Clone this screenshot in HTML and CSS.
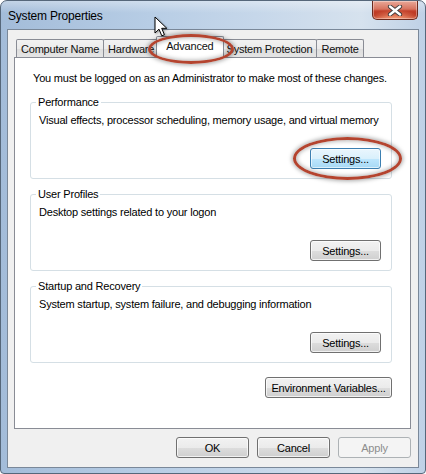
FILE: index.html
```html
<!DOCTYPE html>
<html>
<head>
<meta charset="utf-8">
<link rel="stylesheet" href="styles.css">
</head>
<body>
<div class="window">
  <div class="titlebar">
    <span class="title">System Properties</span>
    <div class="close">
      <svg width="16" height="11" viewBox="0 0 16 11"><path d="M3 1.5 L13 9.5 M13 1.5 L3 9.5" stroke="#3a3a3a" stroke-width="4.2" stroke-linecap="round"/><path d="M3 1.5 L13 9.5 M13 1.5 L3 9.5" stroke="#ffffff" stroke-width="2.4" stroke-linecap="round"/></svg>
    </div>
  </div>
  <div class="client">
    <div class="tabs">
      <div class="tab">Computer Name</div>
      <div class="tab">Hardware</div>
      <div class="tab active">Advanced</div>
      <div class="tab">System Protection</div>
      <div class="tab">Remote</div>
    </div>
    <div class="panel">
      <p class="notice">You must be logged on as an Administrator to make most of these changes.</p>
      <fieldset class="group">
        <legend>Performance</legend>
        <p class="desc">Visual effects, processor scheduling, memory usage, and virtual memory</p>
        <div class="row"><button class="btn hot">Settings...</button></div>
      </fieldset>
      <fieldset class="group">
        <legend>User Profiles</legend>
        <p class="desc">Desktop settings related to your logon</p>
        <div class="row"><button class="btn">Settings...</button></div>
      </fieldset>
      <fieldset class="group">
        <legend>Startup and Recovery</legend>
        <p class="desc">System startup, system failure, and debugging information</p>
        <div class="row"><button class="btn">Settings...</button></div>
      </fieldset>
      <div class="row env"><button class="btn wide">Environment Variables...</button></div>
    </div>
    <div class="footer">
      <button class="btn ok">OK</button>
      <button class="btn ok">Cancel</button>
      <button class="btn ok disabled">Apply</button>
    </div>
  </div>
  <div class="ring ring-tab"></div>
  <div class="ring ring-btn"></div>
  <svg class="cursor" width="14" height="22" viewBox="0 0 14 22">
    <path d="M1 1 L1 17 L5 13.2 L7.8 19.8 L10.4 18.7 L7.7 12.3 L12.8 12.3 Z" fill="#ffffff" stroke="#000000" stroke-width="1" stroke-linejoin="miter"/>
  </svg>
</div>
</body>
</html>
```
FILE: styles.css
```css
* { box-sizing: border-box; }
html, body { margin: 0; padding: 0; background: #ffffff; }
body {
  width: 426px;
  height: 474px;
  overflow: hidden;
  font-family: "Liberation Sans", Arial, sans-serif;
  font-size: 11px;
  letter-spacing: -0.2px;
  color: #000000;
}
.window {
  position: relative;
  width: 426px;
  height: 474px;
  border: 1px solid #56677a;
  border-radius: 7px 7px 4px 4px;
  background:
    linear-gradient(180deg, rgba(255,255,255,0.35) 0px, rgba(255,255,255,0) 12px),
    linear-gradient(90deg, #a3bcd9 0%, #b7cde5 35%, #c6d7ea 60%, #d6e2ee 85%, #bfd1e6 100%);
  padding: 0 6px 5px 6px;
  display: flex;
  flex-direction: column;
}
.titlebar {
  height: 28px;
  display: flex;
  align-items: flex-start;
  justify-content: space-between;
}
.title {
  margin-top: 8px;
  margin-left: 1px;
  font-size: 12px;
  color: #000000;
}
.close {
  width: 46px;
  height: 19px;
  margin-right: 1px;
  border: 1px solid #6b2a1e;
  border-top: none;
  border-radius: 0 0 5px 5px;
  background:
    radial-gradient(ellipse 60% 50% at 50% 100%, rgba(255,170,130,0.9), rgba(255,170,130,0) 100%),
    linear-gradient(180deg, #e9a999 0%, #d7735f 45%, #c3412b 55%, #b8341f 80%, #c9533a 100%);
  box-shadow: inset 0 0 0 1px rgba(255,255,255,0.35);
  display: flex;
  align-items: center;
  justify-content: center;
}
.client {
  flex: 1;
  background: #f0f0f0;
  border: 1px solid #7a8899;
  padding: 9px 7px 8px 6px;
  display: flex;
  flex-direction: column;
}
.tabs {
  display: flex;
  align-items: flex-end;
  height: 18px;
  padding-left: 2px;
  position: relative;
  z-index: 2;
}
.tab {
  height: 18px;
  padding: 3px 4px 0 4px;
  border: 1px solid #898c95;
  border-bottom: none;
  border-radius: 2px 2px 0 0;
  background: linear-gradient(180deg, #f2f2f2 0%, #ebebeb 50%, #dddddd 51%, #e5e5e5 100%);
  margin-right: -1px;
  color: #101010;
  white-space: nowrap;
}
.tab.active {
  height: 22px;
  margin: 0 -2px -1px -2px;
  padding: 3px 9px 0 9px;
  background: #ffffff;
  position: relative;
  z-index: 3;
}
.panel {
  height: 372px;
  background: #ffffff;
  border: 1px solid #898c95;
  padding: 13px 18px 0 15px;
  position: relative;
  z-index: 1;
}
.notice {
  margin: 0 0 0 3px;
  line-height: 15px;
  white-space: nowrap;
}
.group {
  margin: 9px 0 0 0;
  padding: 3px 10px 9px 8px;
  border: 1px solid #d5dfe5;
  border-radius: 3px;
  min-width: 0;
}
.group + .group { margin-top: 8px; }
.group legend {
  padding: 0 2px;
  margin-left: -3px;
  line-height: 15px;
}
.desc {
  margin: 0;
  line-height: 15px;
  white-space: nowrap;
}
.row {
  display: flex;
  justify-content: flex-end;
  margin-top: 20px;
}
.env { margin-top: 14px; }
.btn {
  font-family: inherit;
  font-size: 11px;
  letter-spacing: -0.2px;
  color: #000000;
  height: 21px;
  width: 71px;
  padding: 0;
  border: 1px solid #707070;
  border-radius: 3px;
  background: linear-gradient(180deg, #f2f2f2 0%, #ebebeb 50%, #dddddd 51%, #cfcfcf 100%);
  box-shadow: inset 0 0 0 1px rgba(255,255,255,0.7);
}
.btn.hot {
  border-color: #3c7fb1;
  background: linear-gradient(180deg, #eaf6fd 0%, #d9f0fc 50%, #bee6fd 51%, #a7d9f5 100%);
  box-shadow: inset 0 0 0 1px rgba(255,255,255,0.6);
}
.btn.wide { width: 127px; }
.footer {
  margin-top: 8px;
  display: flex;
  justify-content: flex-end;
  gap: 8px;
}
.btn.ok { width: 73px; }
.btn.disabled {
  color: #8d8d8d;
  border-color: #adb2b5;
  background: #f4f4f4;
  box-shadow: none;
}
.ring {
  position: absolute;
  border: 3px solid #b4442f;
  border-radius: 50%;
  box-shadow: 0 0 4px 1px rgba(0,0,0,0.35), inset 0 0 4px 1px rgba(0,0,0,0.3);
  z-index: 5;
}
.ring-tab {
  left: 147px;
  top: 33px;
  width: 86px;
  height: 30px;
}
.ring-btn {
  left: 292px;
  top: 136px;
  width: 109px;
  height: 43px;
}
.cursor {
  position: absolute;
  left: 153px;
  top: 15px;
  z-index: 6;
  filter: drop-shadow(1px 1px 1px rgba(0,0,0,0.35));
}
```
